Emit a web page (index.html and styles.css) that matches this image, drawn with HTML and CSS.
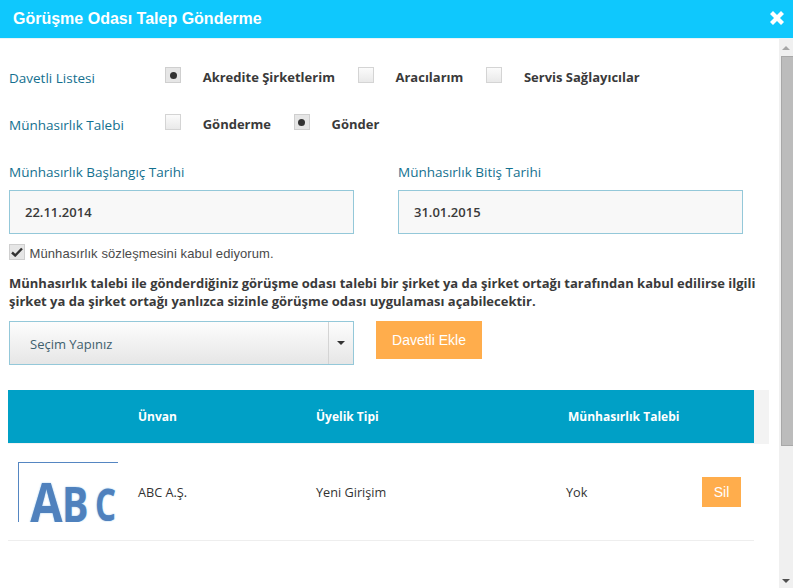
FILE: index.html
```html
<!DOCTYPE html>
<html lang="tr">
<head>
<meta charset="utf-8">
<title>Görüşme Odası Talep Gönderme</title>
<link rel="stylesheet" href="styles.css">
</head>
<body>
<div class="modal">
  <header class="modal-head">
    <h1 class="modal-title">Görüşme Odası Talep Gönderme</h1>
    <svg class="close" viewBox="0 0 16 16" width="16" height="16" aria-label="Kapat"><path d="M1 4 L4 1 L8 5 L12 1 L15 4 L11 8 L15 12 L12 15 L8 11 L4 15 L1 12 L5 8 Z" fill="#fff"/></svg>
  </header>
  <div class="modal-main">
    <div class="content">
      <div class="opt-row">
        <span class="opt-title">Davetli Listesi</span>
        <div class="opts">
          <span class="box box-on"><span class="dot"></span></span><span class="opt-label">Akredite Şirketlerim</span>
          <span class="box"></span><span class="opt-label">Aracılarım</span>
          <span class="box"></span><span class="opt-label">Servis Sağlayıcılar</span>
        </div>
      </div>
      <div class="opt-row">
        <span class="opt-title">Münhasırlık Talebi</span>
        <div class="opts">
          <span class="box"></span><span class="opt-label">Gönderme</span>
          <span class="box box-on"><span class="dot"></span></span><span class="opt-label">Gönder</span>
        </div>
      </div>
      <div class="dates">
        <div class="date">
          <div class="date-label">Münhasırlık Başlangıç Tarihi</div>
          <div class="date-input">22.11.2014</div>
        </div>
        <div class="date">
          <div class="date-label">Münhasırlık Bitiş Tarihi</div>
          <div class="date-input">31.01.2015</div>
        </div>
      </div>
      <div class="agree">
        <span class="box box-on">
          <svg viewBox="0 0 12 10" width="12" height="10"><path d="M1 5.5 L4.2 8.5 L11 1.5" fill="none" stroke="#333" stroke-width="2.4"/></svg>
        </span>
        <span class="agree-text">Münhasırlık sözleşmesini kabul ediyorum.</span>
      </div>
      <p class="note">Münhasırlık talebi ile gönderdiğiniz görüşme odası talebi bir şirket ya da şirket ortağı tarafından kabul edilirse ilgili şirket ya da şirket ortağı yanlızca sizinle görüşme odası uygulaması açabilecektir.</p>
      <div class="pick">
        <div class="select">
          <span class="select-text">Seçim Yapınız</span>
          <span class="select-arrow"><span class="caret"></span></span>
        </div>
        <button class="btn btn-add" type="button">Davetli Ekle</button>
      </div>
      <div class="thead-wrap">
        <div class="thead grid-row">
          <span></span><span>Ünvan</span><span>Üyelik Tipi</span><span>Münhasırlık Talebi</span><span></span>
        </div>
      </div>
      <div class="tbody grid-row">
        <div class="logo"><span class="logo-a">A</span><span class="logo-b">B</span><span class="logo-c">C</span></div>
        <span>ABC A.Ş.</span>
        <span>Yeni Girişim</span>
        <span class="cell-nudge">Yok</span>
        <button class="btn btn-del" type="button">Sil</button>
      </div>
    </div>
    <div class="scrollbar">
      <span class="arrow-up"></span>
      <span class="thumb"></span>
      <span class="arrow-down"></span>
    </div>
  </div>
</div>
</body>
</html>
```
FILE: styles.css
```css
* { box-sizing: border-box; }
html, body { margin: 0; padding: 0; height: 100%; overflow: hidden; background: #fff; }
body { font-family: "Open Sans", sans-serif; font-size: 13px; color: #3a3a3a; }
.modal { display: flex; flex-direction: column; height: 588px; }
.modal-head {
  height: 39px; flex: none; background: #0fc8fd; border-bottom: 1px solid #e9f4f8;
  display: flex; align-items: center; justify-content: space-between;
  padding: 0 8px 1px 13px;
}
.modal-title { margin: 0; font: bold 16px "Liberation Sans", Arial, sans-serif; color: #fff; }
.close { display: block; margin-top: -2px; }
.modal-main { flex: 1; display: flex; min-height: 0; }
.content { width: 779px; flex: none; padding: 28px 0 0 8px; }
.opt-row { display: flex; height: 16px; align-items: center; margin: 0 0 31px 1px; }
.opt-title { width: 156px; color: #14708f; font-size: 13.5px; margin-top: 6px; }
.opts { display: flex; align-items: center; }
.box {
  width: 16px; height: 16px; flex: none; margin-right: 21.7px;
  border: 1px solid #d4d4d4; background: linear-gradient(#fbfbfb, #e9e9e9);
  display: flex; align-items: center; justify-content: center;
}
.box-on { background: #e6e6e6; border-color: #cfcfcf; }
.dot { width: 7px; height: 7px; border-radius: 50%; background: #333; }
.opt-label { font-weight: 700; margin-right: 22.9px; margin-top: 4px; color: #3a3a3a; }
.dates { display: flex; gap: 44px; padding-top: 2px; margin: 0 0 10px 1px; }
.date { width: 345px; }
.date-label { color: #14708f; font-size: 13.5px; height: 27px; line-height: 18px; }
.date-input {
  height: 44px; border: 1px solid #94c8d9; background: #f8f8f8;
  padding-left: 15px; line-height: 42px; font-weight: 600; color: #3a3a3a;
}
.agree { display: flex; align-items: center; height: 16px; margin-left: 1px; }
.agree .box { margin-right: 4.5px; }
.agree-text { font: 13px "Liberation Sans", Arial, sans-serif; letter-spacing: .09px; color: #4a4a4a; margin-top: 3px; }
.note { margin: 14px 0 0 1px; width: 752px; font-weight: 700; line-height: 18px; color: #3a3a3a; }
.pick { display: flex; align-items: flex-start; margin: 11px 0 0 1px; gap: 22px; }
.select {
  width: 345px; height: 44px; border: 1px solid #94c8d9;
  background: linear-gradient(#fdfdfd, #e6e6e6); display: flex;
}
.select-text { flex: 1; padding-left: 20px; line-height: 44px; color: #40606e; }
.select-arrow { width: 25px; border-left: 1px solid #d4d4d4; display: flex; align-items: center; justify-content: center; }
.caret { width: 0; height: 0; border: 4px solid transparent; border-top: 4px solid #333; border-bottom: 0; }
.btn { border: 0; padding: 0; background: #ffad4c; color: #fff; font-family: "Liberation Sans", Arial, sans-serif; }
.btn-add { width: 106px; height: 38px; font-size: 14px; }
.btn-del { width: 39px; height: 30px; font-size: 14px; font-weight: 400; }
.thead-wrap { width: 761px; background: #f3f3f3; height: 54px; margin-top: 25px; }
.grid-row { display: grid; grid-template-columns: 130px 178px 252px 134px 52px; width: 746px; align-items: center; }
.thead { height: 53px; background: #00a0c6; color: #fff; font-size: 12px; font-weight: 700; }
.tbody { height: 97px; border-bottom: 1px solid #eee; font-size: 12.7px; color: #333; }
.cell-nudge { margin-left: -2px; }
.logo {
  margin-left: 10px; width: 100px; height: 60px; overflow: hidden;
  border-top: 1px solid #5586c2; border-left: 1px solid #5586c2; position: relative;
}
.logo span {
  position: absolute; line-height: 1; font-weight: 700; color: #4f81bd;
  text-shadow: 0 0 2px #8fc0e8; transform-origin: left top;
}
.logo-a { left: 11px; top: 10px; font-size: 56px; transform: scaleX(.85); }
.logo-b { left: 43px; top: 17px; font-size: 48px; transform: scaleX(.82); }
.logo-c { left: 76px; top: 19px; font-size: 44px; transform: scaleX(.75); }
.scrollbar { width: 14px; flex: none; background: #f0f0f0; display: flex; flex-direction: column; align-items: flex-end; }
.arrow-up { width: 0; height: 0; margin: 7px 3px 0 0; border: 4px solid transparent; border-bottom: 4px solid #a6a6a6; border-top: 0; }
.thumb { width: 12px; height: 390px; margin-top: 6px; background: #bcbcbc; border: 1px solid #a8a8a8; border-right: 0; }
.arrow-down { width: 0; height: 0; margin: auto 3px 5px 0; border: 4px solid transparent; border-top: 4px solid #505050; border-bottom: 0; }
```
